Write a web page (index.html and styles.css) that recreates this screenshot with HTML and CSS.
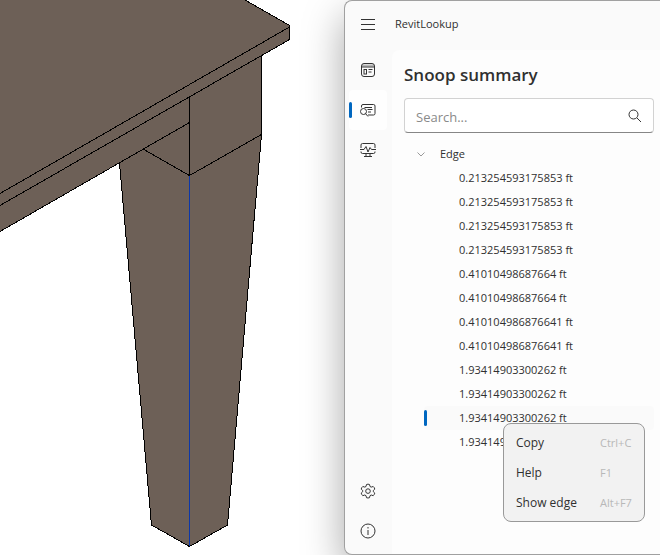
FILE: index.html
```html
<!DOCTYPE html>
<html lang="en">
<head>
<meta charset="utf-8">
<meta name="viewport" content="width=device-width, initial-scale=1">
<title>RevitLookup</title>
<link rel="stylesheet" href="styles.css">
</head>
<body>
<main class="workspace">
  <section class="viewport" aria-label="Model view">
    <svg class="model" viewBox="0 0 344 555" preserveAspectRatio="xMinYMin slice" shape-rendering="crispEdges" aria-hidden="true">
      <path class="face" d="M0 0H245L289.500 25.500V39.500L261.500 55V134.500L227.500 525L189.500 546.500L151.500 525L119.500 163L0 231.500Z"/>
      <path class="line" d="M245 0L289.500 25.500V39.500L0 205.500M289.500 27L0 193.500M261.500 55V134.500L227.500 525L189.500 546.500L151.500 525L119.500 163M0 231.500L189.500 122.500M189.500 96V175M143 149L189.500 175.500L261.500 134.500"/>
      <path class="line picked" d="M189.500 176V546"/>
    </svg>
  </section>

  <section class="window" aria-label="RevitLookup">
    <header class="titlebar">
      <button class="icon-button" type="button" aria-label="Menu">
        <svg class="icon" viewBox="0 0 16 16"><path d="M1 3.500H15M1 8.500H15M1 13.500H15"/></svg>
      </button>
      <span class="app-name">RevitLookup</span>
    </header>

    <nav class="rail" aria-label="Pages">
      <button class="icon-button" type="button" aria-label="Dashboard">
        <svg class="icon" viewBox="0 0 16 16"><rect x="1.500" y="1.500" width="13" height="13" rx="2.500"/><path d="M2 3.500H14" stroke-width="2" opacity=".35"/><path d="M1.500 5H14.500M8.500 7.500H12.500M8.500 10H11.500"/><rect x="4" y="7.500" width="2.500" height="4.500"/></svg>
      </button>
      <button class="icon-button current" type="button" aria-label="Snoop summary">
        <svg class="icon" viewBox="0 0 16 16"><path d="M1.500 5.500V4Q1.500 2.500 3 2.500H13.500Q15 2.500 15 4V11.500Q15 13 13.500 13H8M4.500 5.500H12M7.500 7.500H12.500M8 10H11"/><circle cx="3.500" cy="9.500" r="3"/><path d="M5.500 11.500L8 14.500"/></svg>
      </button>
      <button class="icon-button" type="button" aria-label="Event monitor">
        <svg class="icon" viewBox="0 0 16 16"><path d="M1 6V3Q1 1.500 2.500 1.500H13.500Q15 1.500 15 3V6M1 9.500V10Q1 11.500 2.500 11.500H13.500Q15 11.500 15 10V9.500M6 12V14.500M10 12V14.500M4 14.500H12M0 7.500H4L6 4.500L8 10L10 5.500L11.500 7.500H16"/></svg>
      </button>
      <button class="icon-button push-down" type="button" aria-label="Settings">
        <svg class="icon" viewBox="0 0 16 16"><path d="M6.500 1.500Q8 .8 9.500 1.500L10 3.500L11.200 4.100L13.200 3.500Q14.500 4.500 14.800 6.100L13.300 7.500V8.700L14.800 10.100Q14.400 11.600 13.200 12.700L11.200 12L10 12.700L9.500 14.700Q8 15.300 6.500 14.700L6 12.700L4.800 12L2.800 12.700Q1.600 11.600 1.200 10.100L2.700 8.700V7.500L1.200 6.100Q1.500 4.500 2.800 3.500L4.800 4.100L6 3.500Z"/><circle cx="8" cy="8.100" r="2.300"/></svg>
      </button>
      <button class="icon-button" type="button" aria-label="About">
        <svg class="icon" viewBox="0 0 16 16"><circle cx="8" cy="8" r="7"/><path d="M8 7V12M8 4V5.500"/></svg>
      </button>
    </nav>

    <div class="page">
      <h1 class="page-title">Snoop summary</h1>
      <div class="search">
        <input class="search-input" type="text" placeholder="Search..." aria-label="Search">
        <button class="search-button" type="button" aria-label="Run search">
          <svg class="icon" viewBox="0 0 16 16"><circle cx="6.500" cy="6.500" r="4.500"/><path d="M10 10L14 14"/></svg>
        </button>
      </div>

      <div class="tree" role="tree" aria-label="Objects">
        <div class="group" role="treeitem" aria-expanded="true">
          <svg class="chevron" viewBox="0 0 8 8" aria-hidden="true"><path d="M.5 2.500L4 6L7.500 2.500"/></svg>
          <span>Edge</span>
        </div>
        <div class="leaf" role="treeitem">0.213254593175853 ft</div>
        <div class="leaf" role="treeitem">0.213254593175853 ft</div>
        <div class="leaf" role="treeitem">0.213254593175853 ft</div>
        <div class="leaf" role="treeitem">0.213254593175853 ft</div>
        <div class="leaf" role="treeitem">0.41010498687664 ft</div>
        <div class="leaf" role="treeitem">0.41010498687664 ft</div>
        <div class="leaf" role="treeitem">0.410104986876641 ft</div>
        <div class="leaf" role="treeitem">0.410104986876641 ft</div>
        <div class="leaf" role="treeitem">1.93414903300262 ft</div>
        <div class="leaf" role="treeitem">1.93414903300262 ft</div>
        <div class="leaf selected" role="treeitem" aria-selected="true">1.93414903300262 ft
          <div class="menu" role="menu">
            <button class="menu-item" type="button" role="menuitem"><span>Copy</span><kbd>Ctrl+C</kbd></button>
            <button class="menu-item" type="button" role="menuitem"><span>Help</span><kbd>F1</kbd></button>
            <button class="menu-item" type="button" role="menuitem"><span>Show edge</span><kbd>Alt+F7</kbd></button>
          </div>
        </div>
        <div class="leaf" role="treeitem">1.93414903300262 ft</div>
      </div>
    </div>
  </section>
</main>
</body>
</html>
```
FILE: styles.css
```css
* {
  box-sizing: border-box;
}

body {
  margin: 0;
  background: #fff;
  color: #303030;
  font: 11px/16px "Open Sans", "Noto Sans", sans-serif;
}

button {
  margin: 0;
  padding: 0;
  border: 0;
  background: none;
  color: inherit;
  font: inherit;
}

.workspace {
  display: grid;
  grid-template-columns: 344fr 316fr;
  min-height: 100vh;
  overflow: hidden;
}

.viewport {
  position: relative;
}

.model {
  position: absolute;
  width: 100%;
  height: 100%;
}

.face {
  fill: #6d6057;
}

.line {
  fill: none;
  stroke: #000;
}

.picked {
  stroke: #0c37a8;
}

.window {
  position: relative;
  display: grid;
  grid-template: 49px 1fr / 47px 1fr;
  border: 1px solid #a0a0a0;
  border-right: 0;
  border-radius: 8px 0 0 8px;
  background: #fafafa;
  box-shadow: 0 16px 40px rgba(0, 0, 0, .35);
}

.titlebar {
  grid-column: 1 / 3;
  display: flex;
  align-items: center;
  gap: 8px;
  padding: 0 0 3px 4px;
}

.icon-button {
  position: relative;
  display: grid;
  place-items: center;
  width: 38px;
  height: 40px;
  border-radius: 4px;
}

.current {
  background: #fefefe;
}

.current::before {
  content: "";
  position: absolute;
  left: 0;
  width: 3px;
  height: 16px;
  border-radius: 2px;
  background: #0067c0;
}

.icon {
  width: 16px;
  height: 16px;
  fill: none;
  stroke: #333;
}

.rail {
  display: flex;
  flex-direction: column;
  padding: 0 0 3px 4px;
}

.push-down {
  margin-top: auto;
}

.page {
  padding: 13px 6px 0 12px;
  border-radius: 8px 0 0 0;
  background: #fdfdfd;
}

.page-title {
  margin: 0 0 11px;
  font-size: 17px;
  font-weight: 600;
  line-height: 24px;
}

.search {
  display: flex;
  height: 35px;
  border: 1px solid #d2d2d2;
  border-bottom-color: #868686;
  border-radius: 4px;
  background: #fff;
}

.search-input {
  flex: 1;
  min-width: 0;
  padding: 2px 11px 0;
  border: 0;
  outline: 0;
  background: none;
  color: inherit;
  font: inherit;
  font-size: 13px;
}

.search-input::placeholder {
  color: #8a8a8a;
}

.search-button {
  display: grid;
  place-items: center;
  width: 36px;
}

.tree {
  padding-top: 9px;
}

.group,
.leaf {
  height: 24px;
  line-height: 24px;
}

.group {
  display: flex;
  align-items: center;
  gap: 15px;
  padding-left: 13px;
}

.chevron {
  width: 8px;
  height: 8px;
  fill: none;
  stroke: #999;
}

.leaf {
  padding-left: 55px;
}

.selected {
  position: relative;
  margin-left: 20px;
  padding-left: 35px;
  border-radius: 4px;
  background: #fafafa;
}

.selected::before {
  content: "";
  position: absolute;
  top: 4px;
  left: 0;
  width: 3px;
  height: 16px;
  border-radius: 2px;
  background: #0067c0;
}

.menu {
  position: absolute;
  z-index: 1;
  top: 17px;
  right: 9px;
  width: 142px;
  padding: 4px 0 3px;
  border: 1px solid #999;
  border-radius: 8px;
  background: #f2f2f2;
}

.menu-item {
  display: grid;
  grid-template-columns: 84px 1fr;
  width: 100%;
  padding-left: 12px;
  font-size: 12px;
  line-height: 30px;
  text-align: left;
}

.menu-item kbd {
  color: #b8b8b8;
  font: inherit;
  font-size: 11px;
  line-height: 30px;
}
```
